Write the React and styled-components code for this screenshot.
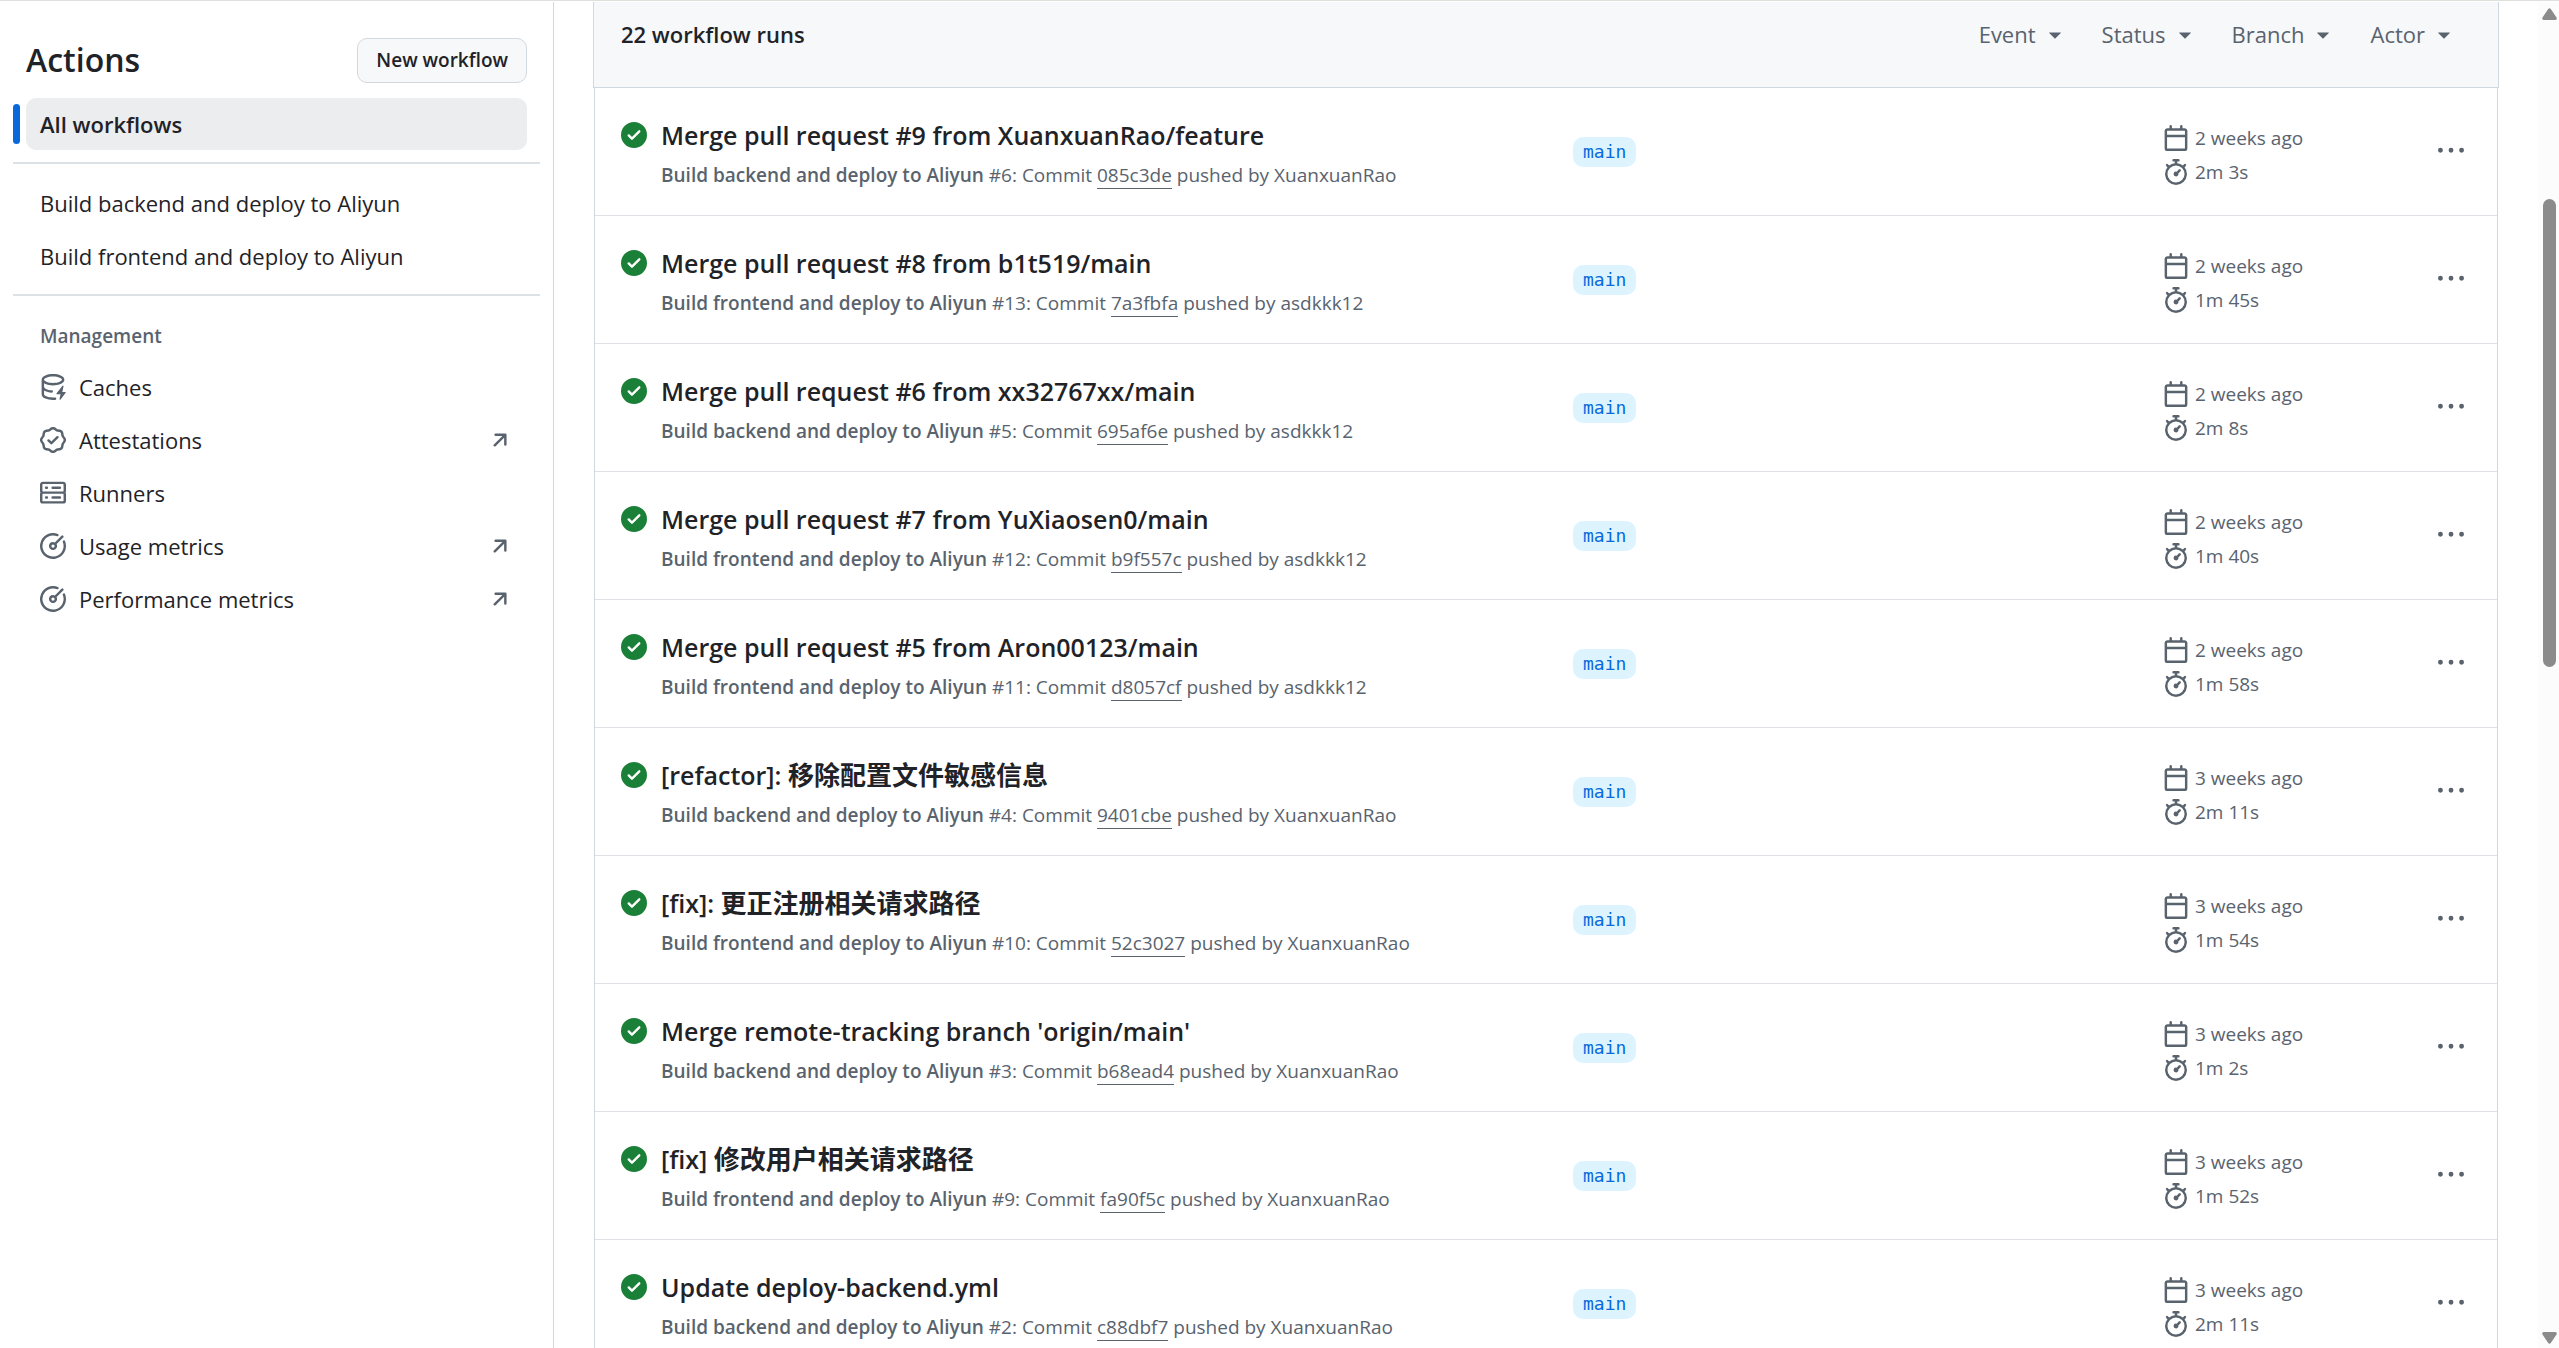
import React from 'react';
import styled, { createGlobalStyle } from 'styled-components';

const GlobalStyle = createGlobalStyle`
  * {
    box-sizing: border-box;
  }
  body {
    margin: 0;
    overflow: hidden;
    background: #ffffff;
    color: #1f2328;
    font-family: 'Open Sans', 'Noto Sans', 'Noto Sans CJK SC', sans-serif;
    font-size: 22px;
    line-height: 34px;
  }
  h1, h2, h3, p, ul {
    margin: 0;
    padding: 0;
  }
  ul {
    list-style: none;
  }
  a {
    color: inherit;
    text-decoration: none;
  }
  button {
    font: inherit;
    cursor: pointer;
  }
`;

const Page = styled.div`
  display: flex;
  height: 100vh;
  overflow: hidden;
  border-top: 1px solid #dfe0dc;
  padding-top: 1px;
`;

const Sidebar = styled.aside`
  flex: 0 0 554px;
  border-right: 1px solid #d1d9e0;
  padding: 35px 13px 0;
`;
const SidebarHeader = styled.div`
  display: flex;
  align-items: center;
  justify-content: space-between;
  padding: 0 13px;
  margin-bottom: 15px;
`;
const SidebarTitle = styled.h1`
  font-size: 32px;
  line-height: 46px;
  font-weight: 600;
`;
const NewButton = styled.a`
  border: 1px solid #d1d9e0;
  border-radius: 10px;
  background: #f6f8fa;
  padding: 0 18px;
  font-size: 19px;
  line-height: 43px;
  font-weight: 600;
`;
const NavList = styled.ul`
  padding: 0 13px;
`;
const NavItem = styled.li`
  position: relative;
`;
const ActiveBar = styled.span`
  position: absolute;
  left: -13px;
  top: 6px;
  bottom: 6px;
  width: 7px;
  border-radius: 4px;
  background: #0969da;
`;
const NavLink = styled.a`
  display: flex;
  align-items: center;
  gap: 13px;
  height: ${({ $active }) => ($active ? '52px' : '53px')};
  padding: 0 14px;
  border-radius: 10px;
  background: ${({ $active }) => ($active ? '#ecedef' : 'transparent')};
  font-weight: ${({ $active }) => ($active ? 600 : 400)};
`;
const NavLabel = styled.span`
  flex: 1;
`;
const Divider = styled.hr`
  border: 0;
  height: 2px;
  margin: 12px 0;
  background: #dce1e6;
`;
const GroupTitle = styled.h3`
  padding: 11px 27px 7px;
  font-size: 19px;
  line-height: 34px;
  font-weight: 600;
  color: #59636e;
`;

const Main = styled.main`
  flex: 1;
  min-width: 0;
  padding: 0 39px;
`;
const RunsHeader = styled.div`
  display: flex;
  align-items: flex-start;
  justify-content: space-between;
  height: 86px;
  padding: 15px 41px 0 27px;
  border: 1px solid #d1d9e0;
  border-top: 0;
  background: #f6f8fa;
`;
const RunsCount = styled.h2`
  font-size: 22px;
  line-height: 34px;
  font-weight: 600;
`;
const Filters = styled.div`
  display: flex;
  gap: 34px;
`;
const FilterButton = styled.button`
  display: flex;
  align-items: center;
  gap: 6px;
  border: 0;
  padding: 0;
  background: none;
  color: #59636e;
`;
const RunList = styled.ul`
  margin: 0 1px;
  border: 1px solid #d1d9e0;
  border-top: 0;
`;
const Run = styled.li`
  display: grid;
  grid-template-columns: minmax(0, 1fr) 590px 275px auto;
  height: 128px;
  padding: 30px 33px 0 26px;
  border-bottom: 1px solid #dee2e6;
`;
const RunSummary = styled.div`
  display: grid;
  grid-template-columns: 26px 1fr;
  column-gap: 14px;
  align-content: start;
`;
const StatusIcon = styled.span`
  display: flex;
  align-items: center;
  height: 34px;
  color: #1a7f37;
`;
const RunTitle = styled.h3`
  font-size: 25px;
  line-height: 34px;
  font-weight: 600;
`;
const ChineseText = styled.span`
  font-family: 'Noto Sans CJK SC', sans-serif;
  font-size: 26px;
  line-height: 32px;
  font-weight: 700;
`;
const RunDetails = styled.p`
  grid-column: 2;
  margin-top: 7px;
  font-size: 19px;
  line-height: 32px;
  color: #59636e;
`;
const WorkflowName = styled.strong`
  font-weight: 600;
`;
const CommitLink = styled.a`
  border-bottom: 1px solid #59636e;
`;
const BranchLabel = styled.a`
  justify-self: start;
  align-self: start;
  margin-top: 19px;
  padding: 0 10px;
  border-radius: 10px;
  background: #ddf4ff;
  color: #0969da;
  font-family: 'DejaVu Sans Mono', monospace;
  font-size: 18px;
  line-height: 30px;
`;
const RunMeta = styled.div`
  padding-top: 3px;
  font-size: 19px;
  color: #59636e;
`;
const MetaLine = styled.div`
  display: flex;
  align-items: center;
  gap: 6px;
`;
const MenuButton = styled.button`
  display: flex;
  align-items: center;
  align-self: start;
  height: 66px;
  border: 0;
  padding: 0;
  background: none;
  color: #59636e;
`;

const ScrollTrack = styled.div`
  display: flex;
  flex-direction: column;
  align-items: center;
  flex: 0 0 21px;
  padding: 6px 0 4px 2px;
  background: #fcfcfc;
  color: #8b8b8b;
`;
const ScrollThumb = styled.div`
  width: 13px;
  height: 35%;
  margin: 179px 0 auto;
  border-radius: 7px;
  background: #8b8b8b;
`;

const Svg = styled.svg`
  flex: none;
  display: block;
  fill: ${({ $muted }) => ($muted ? '#59636e' : 'currentColor')};
`;

const paths = {
  check:
    'M8 16A8 8 0 1 1 8 0a8 8 0 0 1 0 16Zm3.78-9.72a.751.751 0 0 0-.018-1.042.751.751 0 0 0-1.042-.018L6.75 9.19 5.28 7.72a.751.751 0 0 0-1.042.018.751.751 0 0 0-.018 1.042l2 2a.75.75 0 0 0 1.06 0Z',
  calendar:
    'M4.75 0a.75.75 0 0 1 .75.75V2h5V.75a.75.75 0 0 1 1.5 0V2h1.25c.966 0 1.75.784 1.75 1.75v10.5A1.75 1.75 0 0 1 13.25 16H2.75A1.75 1.75 0 0 1 1 14.25V3.75C1 2.784 1.784 2 2.75 2H4V.75A.75.75 0 0 1 4.75 0ZM2.5 7.5v6.75c0 .138.112.25.25.25h10.5a.25.25 0 0 0 .25-.25V7.5Zm10.75-4H2.75a.25.25 0 0 0-.25.25V6h11V3.75a.25.25 0 0 0-.25-.25Z',
  stopwatch:
    'M5.75.75A.75.75 0 0 1 6.5 0h3a.75.75 0 0 1 0 1.5h-.75v1l-.001.041a6.724 6.724 0 0 1 3.464 1.435l.007-.006.75-.75a.749.749 0 0 1 1.275.326.749.749 0 0 1-.215.734l-.75.75-.006.007a6.75 6.75 0 1 1-10.548 0L2.72 5.03l-.75-.75a.751.751 0 0 1 .018-1.042.751.751 0 0 1 1.042-.018l.75.75.007.006A6.72 6.72 0 0 1 7.25 2.541V1.5H6.5a.75.75 0 0 1-.75-.75ZM8 14.5a5.25 5.25 0 1 0-.001-10.501A5.25 5.25 0 0 0 8 14.5Zm.389-6.7 1.33-1.33a.75.75 0 1 1 1.061 1.06L9.45 8.861A1.503 1.503 0 0 1 8 10.75a1.499 1.499 0 1 1 .389-2.95Z',
  kebab:
    'M8 9a1.5 1.5 0 1 0 0-3 1.5 1.5 0 0 0 0 3ZM1.5 9a1.5 1.5 0 1 0 0-3 1.5 1.5 0 0 0 0 3Zm13 0a1.5 1.5 0 1 0 0-3 1.5 1.5 0 0 0 0 3Z',
  arrow:
    'M4.53 4.75A.75.75 0 0 1 5.28 4h6.01a.75.75 0 0 1 .75.75v6.01a.75.75 0 0 1-1.5 0v-4.2l-5.26 5.261a.749.749 0 0 1-1.275-.326.749.749 0 0 1 .215-.734L9.48 5.5h-4.2a.75.75 0 0 1-.75-.75Z',
  triangle:
    'm4.427 7.427 3.396 3.396a.25.25 0 0 0 .354 0l3.396-3.396A.25.25 0 0 0 11.396 7H4.604a.25.25 0 0 0-.177.427Z',
  server:
    'M1.75 1h12.5c.966 0 1.75.784 1.75 1.75v4c0 .372-.116.717-.314 1 .198.283.314.628.314 1v4a1.75 1.75 0 0 1-1.75 1.75H1.75A1.75 1.75 0 0 1 0 12.75v-4c0-.358.109-.707.314-1a1.739 1.739 0 0 1-.314-1v-4C0 1.784.784 1 1.75 1ZM1.5 2.75v4c0 .138.112.25.25.25h12.5a.25.25 0 0 0 .25-.25v-4a.25.25 0 0 0-.25-.25H1.75a.25.25 0 0 0-.25.25Zm.25 5.75a.25.25 0 0 0-.25.25v4c0 .138.112.25.25.25h12.5a.25.25 0 0 0 .25-.25v-4a.25.25 0 0 0-.25-.25ZM7 4.75A.75.75 0 0 1 7.75 4h4.5a.75.75 0 0 1 0 1.5h-4.5A.75.75 0 0 1 7 4.75ZM7.75 10h4.5a.75.75 0 0 1 0 1.5h-4.5a.75.75 0 0 1 0-1.5ZM3 4.75A.75.75 0 0 1 3.75 4h.5a.75.75 0 0 1 0 1.5h-.5A.75.75 0 0 1 3 4.75ZM3.75 10h.5a.75.75 0 0 1 0 1.5h-.5a.75.75 0 0 1 0-1.5Z',
  meter:
    'M8 1.5a6.5 6.5 0 1 0 6.016 4.035.75.75 0 0 1 1.388-.57 8 8 0 1 1-4.37-4.37.75.75 0 0 1-.569 1.389A6.473 6.473 0 0 0 8 1.5Zm6.28.22a.75.75 0 0 1 0 1.06l-4.063 4.064a2.5 2.5 0 1 1-1.06-1.06L13.22 1.72a.75.75 0 0 1 1.06 0ZM7 8a1 1 0 1 0 2 0 1 1 0 0 0-2 0Z',
  verified:
    'm9.585.52.929.68c.153.112.331.186.518.215l1.138.175a2.678 2.678 0 0 1 2.24 2.24l.174 1.139c.029.187.103.365.215.518l.68.928a2.677 2.677 0 0 1 0 3.17l-.68.928a1.174 1.174 0 0 0-.215.518l-.175 1.138a2.678 2.678 0 0 1-2.241 2.241l-1.138.175a1.17 1.17 0 0 0-.518.215l-.928.68a2.677 2.677 0 0 1-3.17 0l-.928-.68a1.174 1.174 0 0 0-.518-.215L3.83 14.41a2.678 2.678 0 0 1-2.24-2.24l-.175-1.138a1.17 1.17 0 0 0-.215-.518l-.68-.928a2.677 2.677 0 0 1 0-3.17l.68-.928c.112-.153.186-.331.215-.518l.175-1.14a2.678 2.678 0 0 1 2.24-2.24l1.139-.175c.187-.029.365-.103.518-.215l.928-.68a2.677 2.677 0 0 1 3.17 0ZM7.303 1.728l-.927.68a2.67 2.67 0 0 1-1.18.489l-1.137.174a1.179 1.179 0 0 0-.987.987l-.174 1.136a2.677 2.677 0 0 1-.489 1.18l-.68.928a1.18 1.18 0 0 0 0 1.394l.68.927c.256.348.424.753.489 1.18l.174 1.137c.078.509.478.909.987.987l1.136.174a2.67 2.67 0 0 1 1.18.489l.928.68c.414.305.979.305 1.394 0l.927-.68a2.67 2.67 0 0 1 1.18-.489l1.137-.174a1.18 1.18 0 0 0 .987-.987l.174-1.136a2.67 2.67 0 0 1 .489-1.18l.68-.928a1.176 1.176 0 0 0 0-1.394l-.68-.927a2.686 2.686 0 0 1-.489-1.18l-.174-1.137a1.179 1.179 0 0 0-.987-.987l-1.136-.174a2.677 2.677 0 0 1-1.18-.489l-.928-.68a1.176 1.176 0 0 0-1.394 0ZM11.28 6.78l-3.75 3.75a.75.75 0 0 1-1.06 0L4.72 8.78a.751.751 0 0 1 .018-1.042.751.751 0 0 1 1.042-.018L7 8.94l3.22-3.22a.751.751 0 0 1 1.042.018.751.751 0 0 1 .018 1.042Z',
  cache:
    'M2.5 5.724V8c0 .248.238.7 1.169 1.159.874.43 2.144.745 3.62.822a.75.75 0 1 1-.078 1.498c-1.622-.085-3.102-.432-4.204-.975a5.565 5.565 0 0 1-.507-.28V12.5c0 .133.058.318.282.551.227.237.591.483 1.101.707 1.015.447 2.47.742 4.117.742.406 0 .802-.018 1.183-.052a.751.751 0 1 1 .134 1.494C8.89 15.98 8.45 16 8 16c-1.805 0-3.475-.32-4.721-.869-.623-.274-1.173-.619-1.579-1.041-.408-.425-.7-.964-.7-1.59v-9c0-.626.292-1.165.7-1.591.406-.42.956-.766 1.579-1.04C4.525.32 6.195 0 8 0c1.806 0 3.476.32 4.721.869.623.274 1.173.619 1.579 1.041.408.425.7.964.7 1.59 0 .626-.292 1.165-.7 1.591-.406.42-.956.766-1.578 1.04C11.475 6.68 9.805 7 8 7c-1.805 0-3.475-.32-4.721-.869a6.15 6.15 0 0 1-.779-.407Zm0-2.224c0 .133.058.318.282.551.227.237.591.483 1.101.707C4.898 5.205 6.353 5.5 8 5.5c1.646 0 3.101-.295 4.118-.742.508-.224.873-.471 1.1-.708.224-.232.282-.417.282-.55 0-.133-.058-.318-.282-.551-.227-.237-.591-.483-1.101-.707C11.102 1.795 9.647 1.5 8 1.5c-1.646 0-3.101.295-4.118.742-.508.224-.873.471-1.1.708-.224.232-.282.417-.282.55ZM14.49 7.582a.375.375 0 0 0-.66-.313l-3.625 4.625a.375.375 0 0 0 .295.606h2.127l-.619 2.922a.375.375 0 0 0 .666.304l3.125-4.125A.375.375 0 0 0 15.5 11h-1.778l.769-3.418Z',
};

const Icon = ({ name, muted }) => (
  <Svg viewBox="0 0 16 16" width="26" height="26" $muted={muted} aria-hidden="true">
    <path d={paths[name]} />
  </Svg>
);

const workflows = [
  'Build backend and deploy to Aliyun',
  'Build frontend and deploy to Aliyun',
];

const management = [
  { icon: 'cache', label: 'Caches' },
  { icon: 'verified', label: 'Attestations', external: true },
  { icon: 'server', label: 'Runners' },
  { icon: 'meter', label: 'Usage metrics', external: true },
  { icon: 'meter', label: 'Performance metrics', external: true },
];

const filters = ['Event', 'Status', 'Branch', 'Actor'];

const runs = [
  { title: 'Merge pull request #9 from XuanxuanRao/feature', target: 'backend', number: 6, commit: '085c3de', actor: 'XuanxuanRao', age: '2 weeks ago', duration: '2m 3s' },
  { title: 'Merge pull request #8 from b1t519/main', target: 'frontend', number: 13, commit: '7a3fbfa', actor: 'asdkkk12', age: '2 weeks ago', duration: '1m 45s' },
  { title: 'Merge pull request #6 from xx32767xx/main', target: 'backend', number: 5, commit: '695af6e', actor: 'asdkkk12', age: '2 weeks ago', duration: '2m 8s' },
  { title: 'Merge pull request #7 from YuXiaosen0/main', target: 'frontend', number: 12, commit: 'b9f557c', actor: 'asdkkk12', age: '2 weeks ago', duration: '1m 40s' },
  { title: 'Merge pull request #5 from Aron00123/main', target: 'frontend', number: 11, commit: 'd8057cf', actor: 'asdkkk12', age: '2 weeks ago', duration: '1m 58s' },
  { title: '[refactor]: ', titleZh: '移除配置文件敏感信息', target: 'backend', number: 4, commit: '9401cbe', actor: 'XuanxuanRao', age: '3 weeks ago', duration: '2m 11s' },
  { title: '[fix]: ', titleZh: '更正注册相关请求路径', target: 'frontend', number: 10, commit: '52c3027', actor: 'XuanxuanRao', age: '3 weeks ago', duration: '1m 54s' },
  { title: "Merge remote-tracking branch 'origin/main'", target: 'backend', number: 3, commit: 'b68ead4', actor: 'XuanxuanRao', age: '3 weeks ago', duration: '1m 2s' },
  { title: '[fix] ', titleZh: '修改用户相关请求路径', target: 'frontend', number: 9, commit: 'fa90f5c', actor: 'XuanxuanRao', age: '3 weeks ago', duration: '1m 52s' },
  { title: 'Update deploy-backend.yml', target: 'backend', number: 2, commit: 'c88dbf7', actor: 'XuanxuanRao', age: '3 weeks ago', duration: '2m 11s' },
];

const WorkflowRun = ({ run }) => (
  <Run>
    <RunSummary>
      <StatusIcon>
        <Icon name="check" />
      </StatusIcon>
      <RunTitle>
        <a href="#run">
          {run.title}
          {run.titleZh && <ChineseText lang="zh">{run.titleZh}</ChineseText>}
        </a>
      </RunTitle>
      <RunDetails>
        <WorkflowName>Build {run.target} and deploy to Aliyun</WorkflowName> #
        {run.number}: Commit <CommitLink href="#commit">{run.commit}</CommitLink>{' '}
        pushed by <a href="#actor">{run.actor}</a>
      </RunDetails>
    </RunSummary>
    <BranchLabel href="#branch">main</BranchLabel>
    <RunMeta>
      <MetaLine>
        <Icon name="calendar" />
        {run.age}
      </MetaLine>
      <MetaLine>
        <Icon name="stopwatch" />
        {run.duration}
      </MetaLine>
    </RunMeta>
    <MenuButton type="button" aria-label="Show options">
      <Icon name="kebab" />
    </MenuButton>
  </Run>
);

const App = () => (
  <>
    <GlobalStyle />
    <Page>
      <Sidebar>
        <SidebarHeader>
          <SidebarTitle>Actions</SidebarTitle>
          <NewButton href="#new">New workflow</NewButton>
        </SidebarHeader>
        <nav>
          <NavList>
            <NavItem>
              <ActiveBar />
              <NavLink href="#all" $active>
                All workflows
              </NavLink>
            </NavItem>
          </NavList>
          <Divider />
          <NavList>
            {workflows.map(name => (
              <NavItem key={name}>
                <NavLink href="#workflow">{name}</NavLink>
              </NavItem>
            ))}
          </NavList>
          <Divider />
          <GroupTitle>Management</GroupTitle>
          <NavList>
            {management.map(item => (
              <NavItem key={item.label}>
                <NavLink href="#management">
                  <Icon name={item.icon} muted />
                  <NavLabel>{item.label}</NavLabel>
                  {item.external && <Icon name="arrow" muted />}
                </NavLink>
              </NavItem>
            ))}
          </NavList>
        </nav>
      </Sidebar>
      <Main>
        <RunsHeader>
          <RunsCount>22 workflow runs</RunsCount>
          <Filters>
            {filters.map(filter => (
              <FilterButton key={filter} type="button">
                {filter}
                <Icon name="triangle" />
              </FilterButton>
            ))}
          </Filters>
        </RunsHeader>
        <RunList>
          {runs.map(run => (
            <WorkflowRun key={run.commit} run={run} />
          ))}
        </RunList>
      </Main>
      <ScrollTrack aria-hidden="true">
        <Svg width="15" height="12" viewBox="0 0 15 12">
          <path d="M6.2 1Q7.5-.6 8.8 1L14.5 9.6Q15.4 12 13 12H2Q-.4 12 .5 9.6Z" />
        </Svg>
        <ScrollThumb />
        <Svg width="15" height="12" viewBox="0 0 15 12">
          <path d="M6.2 11Q7.5 12.6 8.8 11L14.5 2.4Q15.4 0 13 0H2Q-.4 0 .5 2.4Z" />
        </Svg>
      </ScrollTrack>
    </Page>
  </>
);

export default App;
